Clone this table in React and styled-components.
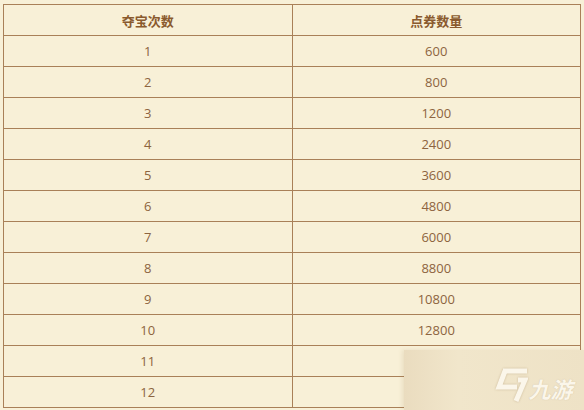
import React from "react";
import styled, { createGlobalStyle } from "styled-components";

const ROWS = [
  [1, 600],
  [2, 800],
  [3, 1200],
  [4, 2400],
  [5, 3600],
  [6, 4800],
  [7, 6000],
  [8, 8800],
  [9, 10800],
  [10, 12800],
  [11, ""],
  [12, ""],
];

const GlobalStyle = createGlobalStyle`
  html, body {
    margin: 0;
    padding: 0;
    background: #f8f0d7;
  }
  body {
    font-family: "Open Sans", "Noto Sans CJK SC", sans-serif;
  }
`;

const Page = styled.div`
  position: relative;
  width: 584px;
  height: 410px;
  overflow: hidden;
  background: #f8f0d7;
  padding: 4px 3px 0 3px;
  box-sizing: border-box;
`;

const Table = styled.table`
  width: 578px;
  border-collapse: collapse;
  table-layout: fixed;
`;

const HeadCell = styled.th`
  width: 50%;
  height: 30px;
  padding: 0;
  border: 1px solid #a98058;
  font-family: "Noto Sans CJK SC", sans-serif;
  font-size: 13px;
  font-weight: 700;
  color: #8a5a2e;
  text-align: center;
`;

const Cell = styled.td`
  height: 30px;
  padding: 0;
  border: 1px solid #a98058;
  font-family: "Open Sans", sans-serif;
  font-size: 13px;
  color: #8d6440;
  text-align: center;
`;

const Watermark = styled.div`
  position: absolute;
  left: 404px;
  top: 350px;
  right: 0;
  bottom: 0;
  background: linear-gradient(90deg, #eadcbf 0%, #f1e6cb 30%, #eee2c6 100%);
  box-shadow: -2px 0 4px rgba(160, 130, 90, 0.15);
  display: flex;
  align-items: flex-end;
  gap: 3px;
  padding: 0 0 11px 90px;
  box-sizing: border-box;
`;

const LogoMark = styled.svg`
  width: 34px;
  height: 35px;
  flex-shrink: 0;
  margin-bottom: -3px;
  filter: drop-shadow(0 0 1px rgba(150, 120, 80, 0.4));
`;

const Brand = styled.span`
  font-family: "Noto Sans CJK SC", sans-serif;
  font-size: 22px;
  font-weight: 700;
  color: #fbf6ea;
  line-height: 22px;
  white-space: nowrap;
  display: inline-block;
  transform: skewX(-14deg);
  text-shadow: 0 0 1px rgba(150, 120, 80, 0.4);
`;

export default function App() {
  return (
    <>
      <GlobalStyle />
      <Page>
        <Table>
          <thead>
            <tr>
              <HeadCell>夺宝次数</HeadCell>
              <HeadCell>点券数量</HeadCell>
            </tr>
          </thead>
          <tbody>
            {ROWS.map(([n, v]) => (
              <tr key={n}>
                <Cell>{n}</Cell>
                <Cell>{v}</Cell>
              </tr>
            ))}
          </tbody>
        </Table>
        <Watermark>
          <LogoMark viewBox="0 0 34 35">
            <g fill="none" stroke="#fbf6ea" strokeWidth="5" strokeLinejoin="miter" strokeLinecap="butt">
              <path d="M9 4 L33 4" />
              <path d="M11 4 L5 20 L23 20" />
              <path d="M24 13 L31 13 L22 34" />
            </g>
          </LogoMark>
          <Brand>九游</Brand>
        </Watermark>
      </Page>
    </>
  );
}
